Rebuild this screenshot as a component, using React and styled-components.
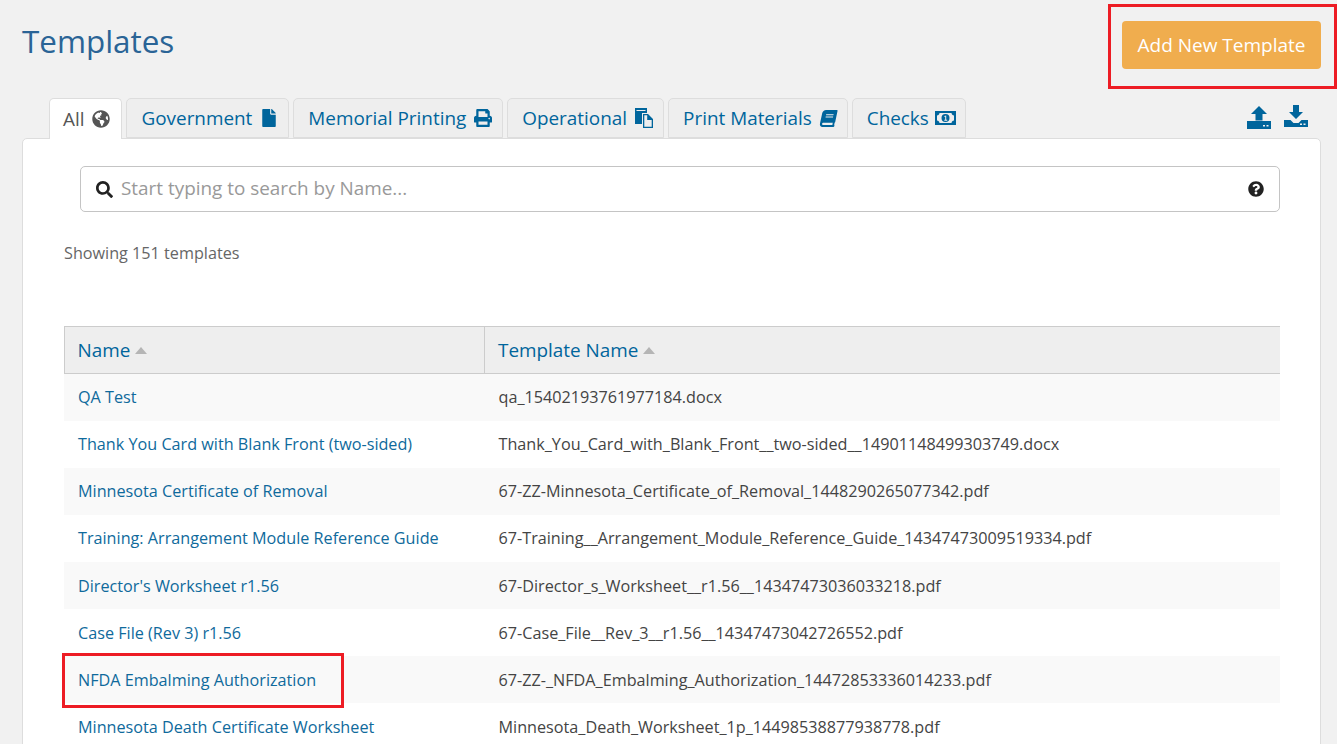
import React from 'react'
import styled, { createGlobalStyle } from 'styled-components'
import { FaGlobeAmericas, FaFile, FaPrint, FaBook, FaSearch, FaQuestionCircle } from 'react-icons/fa'

const GlobalStyle = createGlobalStyle`
  html, body {
    margin: 0;
    height: 744px;
    overflow: hidden;
    background: #f1f1f1;
    font-family: "Open Sans", "Noto Sans", sans-serif;
    color: #444;
  }
`

const Page = styled.div`
  position: relative;
  padding: 0 16px 0 22px;
`

const Header = styled.div`
  display: flex;
  justify-content: space-between;
  align-items: flex-start;
  height: 98px;
`

const Title = styled.h1`
  margin: 17px 0 0;
  font-size: 31.4px;
  line-height: 48px;
  font-weight: 400;
  color: #2a6496;
`

const AddButton = styled.button`
  margin-top: 21px;
  width: 199px;
  height: 48px;
  border: 0;
  border-radius: 4px;
  background: #f0ad4e;
  color: #fff;
  font-family: inherit;
  font-size: 19px;
`

const TabRow = styled.div`
  display: flex;
  align-items: flex-start;
  gap: 4px;
  height: 40px;
  padding-left: 27px;
`

const Tab = styled.div`
  position: relative;
  z-index: 1;
  display: flex;
  align-items: center;
  gap: 8px;
  box-sizing: border-box;
  height: ${p => (p.$active ? 41 : 40)}px;
  padding: 0 ${p => (p.$active ? 11 : 10)}px 0 ${p => (p.$active ? 13 : 14)}px;
  border: 1px solid #ddd;
  border-bottom: ${p => (p.$active ? '0' : '1px solid #ddd')};
  border-radius: 5px 5px 0 0;
  background: ${p => (p.$active ? '#fff' : '#eee')};
  color: ${p => (p.$active ? '#555' : '#00659c')};
  font-size: 18.9px;
`

const TabTools = styled.div`
  display: flex;
  gap: 13px;
  margin-left: auto;
  margin-right: 13px;
  padding-top: 7px;
  color: #00659c;
`

const Panel = styled.div`
  box-sizing: border-box;
  width: 1299px;
  height: 640px;
  padding: 27px 40px 0 57px;
  border: 1px solid #ddd;
  border-radius: 5px;
  background: #fff;
`

const Search = styled.div`
  display: flex;
  align-items: center;
  box-sizing: border-box;
  height: 46px;
  padding: 0 15px;
  border: 1px solid #c4c4c4;
  border-radius: 5px;
  background: #fff;
`

const SearchPlaceholder = styled.span`
  flex: 1;
  margin: 0 0 2px 8px;
  font-size: 18.9px;
  color: #999;
`

const Showing = styled.div`
  margin: 29px 0 61px -16px;
  font-size: 16.2px;
  line-height: 24px;
  color: #666;
`

const Table = styled.table`
  width: 1216.5px;
  margin-left: -16.5px;
  border-collapse: collapse;
  table-layout: fixed;
`

const HeadCell = styled.th`
  box-sizing: border-box;
  height: 47px;
  padding: 0 13px;
  border-top: 1px solid #ccc;
  border-bottom: 1px solid #ccc;
  border-left: 1px solid #ccc;
  background: #eee;
  color: #00659c;
  font-size: 18.9px;
  font-weight: 400;
  text-align: left;
  &:first-child {
    width: 420.5px;
  }
`

const SortArrow = styled.span`
  display: inline-block;
  margin-left: 5px;
  vertical-align: 3px;
  border-left: 6px solid transparent;
  border-right: 6px solid transparent;
  border-bottom: 7px solid #b5b5b5;
`

const Row = styled.tr`
  height: 47.15px;
  background: ${p => (p.$odd ? '#f9f9f9' : '#fff')};
`

const Cell = styled.td`
  padding: 0 14px;
  font-size: 16.2px;
  color: #444;
  white-space: nowrap;
`

const NameLink = styled.a`
  color: #0f6a9c;
`

const Highlight = styled.div`
  position: absolute;
  box-sizing: border-box;
  left: ${p => p.$x}px;
  top: ${p => p.$y}px;
  width: ${p => p.$w}px;
  height: ${p => p.$h}px;
  border: 3px solid #ed1c24;
  pointer-events: none;
`

const MoneySvg = styled.svg`
  margin: 0 -1px 0 -2px;
`

const FilesIcon = () => (
  <svg width="18" height="20" viewBox="0 0 18 20" fill="currentColor">
    <path fillRule="evenodd" d="M0 0h12v5H7v11H0zM1.500 2v1h9V2z" />
    <path
      fillRule="evenodd"
      d="M8 6h5l5 5v9H8zM9.300 7.300v11.400h7.400V12h-4.500V7.300z"
    />
  </svg>
)

const MoneyIcon = () => (
  <MoneySvg width="21" height="14" viewBox="0 0 21 14" fill="currentColor">
    <path
      fillRule="evenodd"
      d="M0 0h21v14H0zM4.500 2C4.300 3.500 3.400 4.400 2 4.600v4.800c1.400.2 2.300 1.100 2.500 2.600h12c.2-1.500 1.100-2.400 2.500-2.600V4.600c-1.400-.2-2.300-1.100-2.500-2.600z"
    />
    <path d="M10.500 3a4 4 0 1 0 0 8 4 4 0 0 0 0-8zM9.400 5l1.800-.5v4.300h1v1H9.300v-1h.9V5.800l-.8.200z" />
  </MoneySvg>
)

const UploadIcon = () => (
  <svg width="24" height="24" viewBox="0 0 24 24" fill="currentColor">
    <path d="M12 1l8 8h-4.500v6.500h-7V9H4z" />
    <path
      fillRule="evenodd"
      d="M0 16h24v8H0zM16 20v1.500h2V20zm3.500 0v1.500h2V20z"
    />
  </svg>
)

const DownloadIcon = () => (
  <svg width="24" height="24" viewBox="0 0 24 24" fill="currentColor">
    <path d="M9 0h6v7h4l-7 7-7-7h4z" />
    <path
      fillRule="evenodd"
      d="M0 15h6.500l3 3h5l3-3H24v7H0zM16 18.500V20h2v-1.500zm3.500 0V20h2v-1.500z"
    />
  </svg>
)

const tabs = [
  { label: 'Government', icon: <FaFile size={18} /> },
  { label: 'Memorial Printing', icon: <FaPrint size={18} /> },
  { label: 'Operational', icon: <FilesIcon /> },
  { label: 'Print Materials', icon: <FaBook size={17} style={{ transform: 'skewX(-12deg)' }} /> },
  { label: 'Checks', icon: <MoneyIcon /> },
]

const rows = [
  ['QA Test', 'qa_15402193761977184.docx'],
  ['Thank You Card with Blank Front (two-sided)', 'Thank_You_Card_with_Blank_Front__two-sided__14901148499303749.docx'],
  ['Minnesota Certificate of Removal', '67-ZZ-Minnesota_Certificate_of_Removal_1448290265077342.pdf'],
  ['Training: Arrangement Module Reference Guide', '67-Training__Arrangement_Module_Reference_Guide_14347473009519334.pdf'],
  ["Director's Worksheet r1.56", '67-Director_s_Worksheet__r1.56__14347473036033218.pdf'],
  ['Case File (Rev 3) r1.56', '67-Case_File__Rev_3__r1.56__14347473042726552.pdf'],
  ['NFDA Embalming Authorization', '67-ZZ-_NFDA_Embalming_Authorization_14472853336014233.pdf'],
  ['Minnesota Death Certificate Worksheet', 'Minnesota_Death_Worksheet_1p_14498538877938778.pdf'],
]

const App = () => {
  return (
    <Page>
      <GlobalStyle />
      <Header>
        <Title>Templates</Title>
        <AddButton>Add New Template</AddButton>
      </Header>

      <TabRow>
        <Tab $active>
          All <FaGlobeAmericas size={18} />
        </Tab>
        {tabs.map(tab => (
          <Tab key={tab.label}>
            {tab.label} {tab.icon}
          </Tab>
        ))}
        <TabTools>
          <UploadIcon />
          <DownloadIcon />
        </TabTools>
      </TabRow>

      <Panel>
        <Search>
          <FaSearch size={17} color="#222" />
          <SearchPlaceholder>Start typing to search by Name...</SearchPlaceholder>
          <FaQuestionCircle size={16} color="#222" />
        </Search>

        <Showing>Showing 151 templates</Showing>

        <Table>
          <thead>
            <tr>
              <HeadCell>
                Name
                <SortArrow />
              </HeadCell>
              <HeadCell>
                Template Name
                <SortArrow />
              </HeadCell>
            </tr>
          </thead>
          <tbody>
            {rows.map(([name, file], i) => (
              <Row key={file} $odd={i % 2 === 0}>
                <Cell>
                  <NameLink>{name}</NameLink>
                </Cell>
                <Cell>{file}</Cell>
              </Row>
            ))}
          </tbody>
        </Table>
      </Panel>

      <Highlight $x={1108} $y={4} $w={229} $h={85} />
      <Highlight $x={62} $y={653} $w={282} $h={55} />
    </Page>
  )
}

export default App
